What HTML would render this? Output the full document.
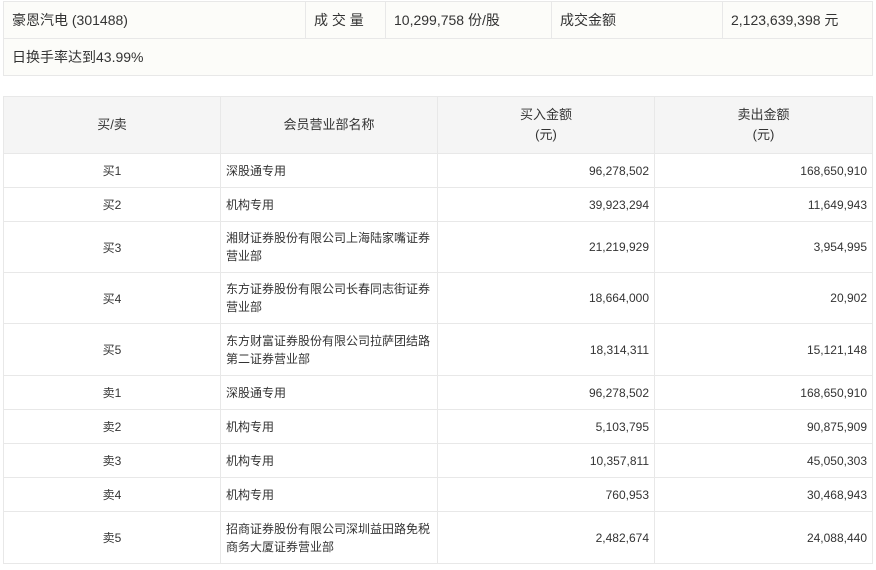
<!DOCTYPE html>
<html><head><meta charset="utf-8"><style>
body{margin:0;background:#fff;font-family:"Liberation Sans","Noto Sans CJK SC",sans-serif;color:#333;}
table{border-collapse:collapse;position:absolute;left:3px;table-layout:fixed}
td{border:1px solid #e8e8e8;padding:0;}
#t1{top:1px;width:869px;background:#fcfcf9;font-size:14px}
#t1 td{height:36px;padding-left:8px}
#t2{top:96px;width:869px;font-size:12px}
#t2 th{background:#f5f5f5;border:1px solid #e8e8e8;font-weight:normal;height:56px;padding:0;font-size:13px;line-height:20px}
#t2 td.c{text-align:center}
#t2 td.l{padding-left:5px;line-height:18px}
#t2 td.r{text-align:right;padding-right:5px}
</style></head><body>
<table id="t1">
<colgroup><col style="width:302px"><col style="width:80px"><col style="width:166px"><col style="width:171px"><col style="width:150px"></colgroup>
<tr><td>豪恩汽电 (301488)</td><td>成 交 量</td><td>10,299,758 份/股</td><td>成交金额</td><td>2,123,639,398 元</td></tr>
<tr><td colspan="5">日换手率达到43.99%</td></tr>
</table>
<table id="t2">
<colgroup><col style="width:217px"><col style="width:217px"><col style="width:217px"><col style="width:218px"></colgroup>
<tr><th>买/卖</th><th>会员营业部名称</th><th>买入金额<br>(元)</th><th>卖出金额<br>(元)</th></tr>
<tr style="height:34px"><td class="c">买1</td><td class="l">深股通专用</td><td class="r">96,278,502</td><td class="r">168,650,910</td></tr>
<tr style="height:34px"><td class="c">买2</td><td class="l">机构专用</td><td class="r">39,923,294</td><td class="r">11,649,943</td></tr>
<tr style="height:51px"><td class="c">买3</td><td class="l">湘财证券股份有限公司上海陆家嘴证券<br>营业部</td><td class="r">21,219,929</td><td class="r">3,954,995</td></tr>
<tr style="height:51px"><td class="c">买4</td><td class="l">东方证券股份有限公司长春同志街证券<br>营业部</td><td class="r">18,664,000</td><td class="r">20,902</td></tr>
<tr style="height:52px"><td class="c">买5</td><td class="l">东方财富证券股份有限公司拉萨团结路<br>第二证券营业部</td><td class="r">18,314,311</td><td class="r">15,121,148</td></tr>
<tr style="height:34px"><td class="c">卖1</td><td class="l">深股通专用</td><td class="r">96,278,502</td><td class="r">168,650,910</td></tr>
<tr style="height:34px"><td class="c">卖2</td><td class="l">机构专用</td><td class="r">5,103,795</td><td class="r">90,875,909</td></tr>
<tr style="height:34px"><td class="c">卖3</td><td class="l">机构专用</td><td class="r">10,357,811</td><td class="r">45,050,303</td></tr>
<tr style="height:34px"><td class="c">卖4</td><td class="l">机构专用</td><td class="r">760,953</td><td class="r">30,468,943</td></tr>
<tr style="height:52px"><td class="c">卖5</td><td class="l">招商证券股份有限公司深圳益田路免税<br>商务大厦证券营业部</td><td class="r">2,482,674</td><td class="r">24,088,440</td></tr>
</table>
</body></html>
